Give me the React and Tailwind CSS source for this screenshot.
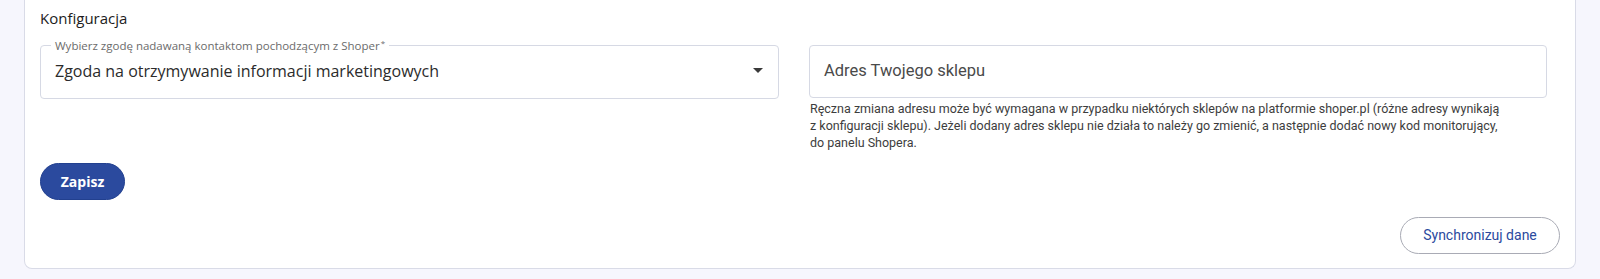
import React from 'react'

function ArrowDown() {
  return (
    <svg width="10" height="5" viewBox="0 0 10 5" className="shrink-0">
      <path d="M0 0 L10 0 L5 5 Z" fill="#3a3a3a" />
    </svg>
  )
}

export default function App() {
  return (
    <div className="min-h-[279px] bg-[#f6f6fd] px-[24px]" style={{ fontFamily: 'Roboto, sans-serif' }}>
      <div className="h-[269px] bg-white border border-t-0 border-[#d9dbe7] rounded-b-[8px] pl-[15px] pr-[14px] flex flex-col">
        <h2 className="mt-[8px] text-[15px] leading-[20px] text-[#1c1c1c]" style={{ fontFamily: '"Open Sans", sans-serif' }}>
          Konfiguracja
        </h2>

        <div className="mt-[17px] grid grid-cols-[739px_738px] gap-x-[30px]">
          {/* Select */}
          <fieldset className="relative h-[60px] -mt-[6px] border border-[#d6d9e4] rounded-[4px] px-[10px] m-0">
            <legend className="px-[4px] ml-0 text-[11.5px] leading-[13px] text-[#6b6b6b]" style={{ fontFamily: '"Open Sans", sans-serif' }}>
              Wybierz zgodę nadawaną kontaktom pochodzącym z Shoper<sup className="text-[8px] ml-[1px]">*</sup>
            </legend>
            <div className="flex items-center justify-between h-[37px] pl-[4px] pr-[5px]">
              <span className="text-[16px] text-[#2b2b2b]" style={{ fontFamily: '"Open Sans", sans-serif' }}>
                Zgoda na otrzymywanie informacji marketingowych
              </span>
              <ArrowDown />
            </div>
          </fieldset>

          {/* Address input */}
          <div>
            <div className="h-[53px] border border-[#d6d9e4] rounded-[4px] flex items-center px-[14px]">
              <span className="text-[16.5px] text-[#4a4a4a]">Adres Twojego sklepu</span>
            </div>
            <p className="mt-[2px] pl-[1px] text-[12.5px] leading-[17px] text-[#3d3d3d]">
              Ręczna zmiana adresu może być wymagana w przypadku niektórych sklepów na platformie shoper.pl (różne adresy wynikają
              <br />
              z konfiguracji sklepu). Jeżeli dodany adres sklepu nie działa to należy go zmienić, a następnie dodać nowy kod monitorujący,
              <br />
              do panelu Shopera.
            </p>
          </div>
        </div>

        <div className="mt-[12px]">
          <button className="w-[85px] h-[37px] rounded-full bg-[#2b4a9e] border border-[#22408f] text-white text-[14px] font-bold" style={{ fontFamily: '"Open Sans", sans-serif' }}>
            Zapisz
          </button>
        </div>

        <div className="flex justify-end mt-[17px] pr-[1px]">
          <button className="w-[160px] h-[37px] rounded-full bg-white border border-[#a9abb5] text-[#2b4a9e] text-[14px]">
            Synchronizuj dane
          </button>
        </div>
      </div>
    </div>
  )
}
